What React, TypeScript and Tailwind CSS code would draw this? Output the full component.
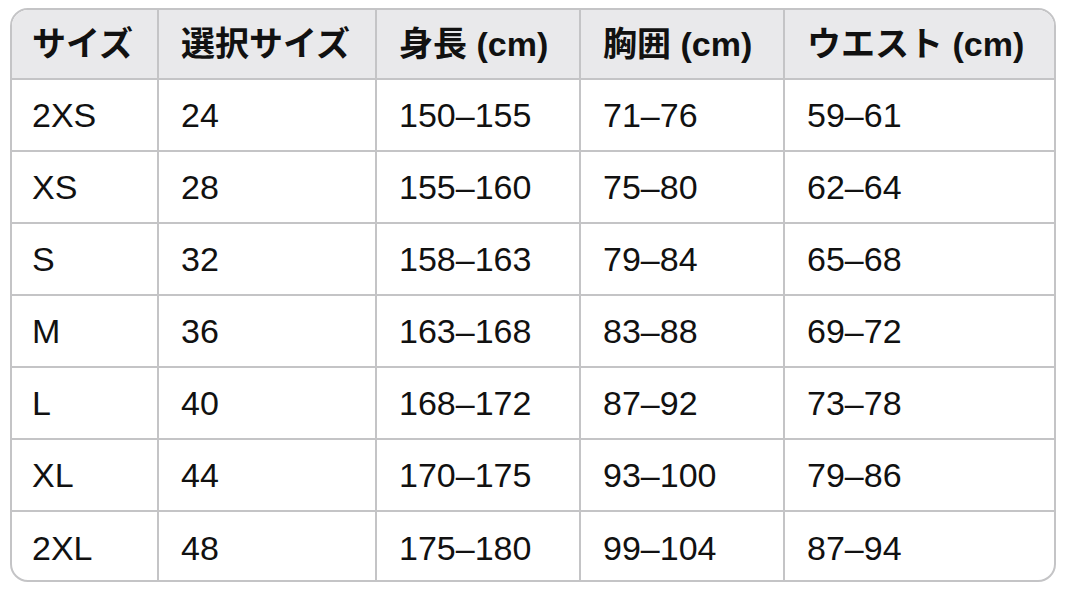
import React from "react";

const headers = ["サイズ", "選択サイズ", "身長 (cm)", "胸囲 (cm)", "ウエスト (cm)"];
const rows = [
  ["2XS", "24", "150–155", "71–76", "59–61"],
  ["XS", "28", "155–160", "75–80", "62–64"],
  ["S", "32", "158–163", "79–84", "65–68"],
  ["M", "36", "163–168", "83–88", "69–72"],
  ["L", "40", "168–172", "87–92", "73–78"],
  ["XL", "44", "170–175", "93–100", "79–86"],
  ["2XL", "48", "175–180", "99–104", "87–94"],
];

const font = {
  fontFamily: '"Liberation Sans", Arial, "Noto Sans CJK JP", sans-serif',
};

export default function App() {
  return (
    <div className="w-[1080px] h-[593px] bg-white pt-[8px] pl-[10px]" style={font}>
      <div className="w-[1046px] h-[574px] rounded-[18px] border-2 border-[#c4c4c6] overflow-hidden">
        <div className="grid grid-cols-[147px_218px_204px_204px_1fr] grid-rows-[70px_repeat(7,72px)] text-[#111]">
          {headers.map((h, i) => (
            <div
              key={h}
              className={`bg-[#e9e9eb] flex items-center text-[34px] font-bold border-b-2 border-[#c4c4c6] ${
                i < 4 ? "border-r-2" : ""
              } ${i > 0 ? "pl-[22px]" : "pl-[20px]"}`}
            >
              {h}
            </div>
          ))}
          {rows.map((r, ri) =>
            r.map((c, ci) => (
              <div
                key={ri + "-" + ci}
                className={`flex items-center text-[34px] border-[#c4c4c6] ${
                  ci < 4 ? "border-r-2" : ""
                } ${ri < 6 ? "border-b-2" : ""} ${ci > 0 ? "pl-[22px]" : "pl-[20px]"}`}
              >
                {c}
              </div>
            ))
          )}
        </div>
      </div>
    </div>
  );
}
